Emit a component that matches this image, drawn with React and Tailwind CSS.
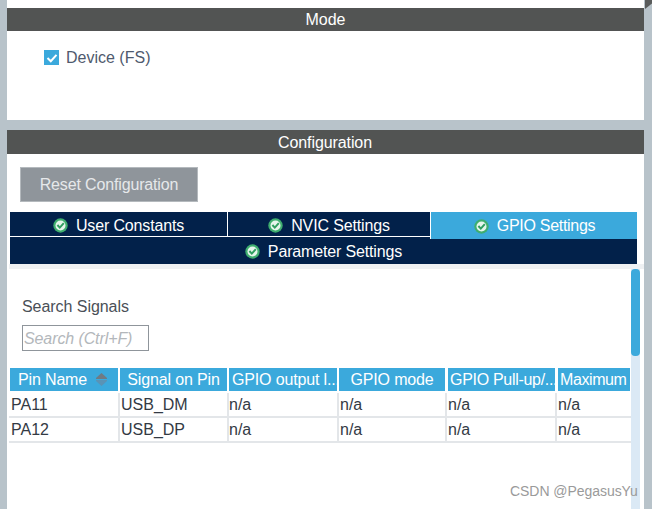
const font = { fontFamily: '"Liberation Sans", Arial, sans-serif' }

function OkIcon() {
  return (
    <svg width="15" height="15" viewBox="0 0 15 15" className="shrink-0">
      <circle cx="7.5" cy="7.5" r="7.2" fill="#3fae6f" />
      <circle cx="7.5" cy="7.5" r="5" fill="#e6f5ec" />
      <path d="M4.4 7 L6.8 9.6 L10.8 5.2" fill="none" stroke="#2f9e5f" strokeWidth="2" />
    </svg>
  )
}

function Tab({ label, className }) {
  return (
    <div className={`flex items-center justify-center gap-2 text-white ${className}`}>
      <OkIcon />
      <span>{label}</span>
    </div>
  )
}

const columns = [
  { label: 'Signal on Pin', className: 'w-[107px] ml-[2px] justify-center' },
  { label: 'GPIO output l...', className: 'w-[108px] ml-[2px] pl-[3px]' },
  { label: 'GPIO mode', className: 'w-[106px] ml-[2px] justify-center' },
  { label: 'GPIO Pull-up/...', className: 'w-[107px] ml-[3px] pl-[2px] tracking-[-0.3px]' },
  { label: 'Maximum', className: 'w-[72px] ml-[3px] pl-[2px] tracking-[-0.4px]' },
]

const rows = [
  ['PA11', 'USB_DM', 'n/a', 'n/a', 'n/a', 'n/a'],
  ['PA12', 'USB_DP', 'n/a', 'n/a', 'n/a', 'n/a'],
]
const cells = [
  'w-[111px] pl-[2px] border-r-2',
  'w-[109px] pl-[1px] border-r-2',
  'w-[110px] border-r-2',
  'w-[108px] pl-[1px] border-r-2',
  'w-[110px] pl-[1px] border-r-2',
  'w-[73px] pl-[1px]',
]

export default function App() {
  return (
    <div className="relative w-[652px] h-[509px] overflow-hidden bg-[#b8c3ca] pl-[7px] text-[16px]" style={font}>
      <div className="absolute right-0 top-0 w-[7px] h-[9px] bg-[#5a5c5c] [clip-path:polygon(0_0,100%_0,100%_40%,0_100%)]" />

      <div className="w-[637px] h-[120px] bg-white pt-2">
        <div className="h-[23px] bg-[#525453] text-white flex items-center justify-center">Mode</div>
        <div className="flex items-center gap-[7px] pl-[37px] pt-[19px] text-[#4f5a6e] leading-[15px]">
          <span className="w-[15px] h-[15px] bg-[#3ba9dc] flex items-center justify-center">
            <svg width="12" height="12" viewBox="0 0 12 12">
              <path d="M1.5 6 L4.8 9.2 L10.5 2.8" fill="none" stroke="white" strokeWidth="2" />
            </svg>
          </span>
          <span>Device (FS)</span>
        </div>
      </div>

      <div className="mt-[10px] w-[637px] h-[379px] bg-white">
        <div className="h-[24px] pt-[1px] pr-[1px] bg-[#525453] text-white flex items-center justify-center tracking-[-0.1px]">Configuration</div>
        <div className="ml-[13px] mt-[13px] w-[178px] h-[35px] bg-[#8f959b] border border-[#b4b9bd] text-[#e6e8ea] flex items-center justify-center tracking-[-0.15px]">
          Reset Configuration
        </div>

        <div className="ml-[3px] mt-[10px] w-[627px] bg-[#02214a]">
          <div className="flex h-[27px]">
            <Tab label="User Constants" className="w-[218px] h-[25px] pt-[3px] border-r border-b border-white tracking-[-0.15px]" />
            <Tab label="NVIC Settings" className="w-[202px] h-[25px] pt-[3px] border-b border-white tracking-[-0.15px]" />
            <div className="w-[1px] bg-white" />
            <Tab label="GPIO Settings" className="w-[206px] pt-[1px] pl-[1px] bg-[#3ba9dc] tracking-[-0.3px]" />
          </div>
          <Tab label="Parameter Settings" className="h-[25px] tracking-[-0.15px]" />
        </div>

        <div className="h-[5px] ml-[2px] bg-[#eff1f3]" />

        <div className="flex ml-[2px] h-[240px]">
          <div className="w-[622px]">
            <div className="pl-[13px] pt-[29px] text-[#4a4f57] leading-[18px] tracking-[-0.05px]">Search Signals</div>
            <div className="ml-[13px] mt-[9px] w-[127px] h-[26px] pt-[1px] border border-[#8f959b] pl-[1px] italic text-[#b3b7bb] flex items-center tracking-[-0.1px]">
              Search (Ctrl+F)
            </div>

            <div className="flex mt-[17px] ml-[1px] h-[23px] text-white tracking-[-0.15px]">
              <div className="w-[108px] bg-[#3ba9dc] flex items-center pl-[8px] gap-[9px]">
                <span>Pin Name</span>
                <svg width="11" height="13" viewBox="0 0 11 13">
                  <path d="M5.5 0 L11 5 V6 H0 V5 Z" fill="#6f7b84" />
                  <path d="M0 7 H11 V8 L5.5 13 L0 8 Z" fill="#5a93b5" />
                </svg>
              </div>
              {columns.map((c) => (
                <div key={c.label} className={`bg-[#3ba9dc] flex items-center whitespace-nowrap ${c.className}`}>
                  {c.label}
                </div>
              ))}
            </div>

            <div className="mt-[2px] text-[#333a44]">
              {rows.map((row) => (
                <div key={row[0]} className="flex h-[25px] border-b-2 border-[#e3e6e9]">
                  {row.map((cell, i) => (
                    <div key={i} className={`${cells[i]} h-[23px] flex items-center border-[#e3e6e9]`}>
                      {cell}
                    </div>
                  ))}
                </div>
              ))}
            </div>
          </div>

          <div className="w-[9px] bg-[#dbe9f5]">
            <div className="w-[9px] h-[87px] bg-[#3ba9dc] rounded-[4px]" />
          </div>
        </div>
      </div>

      <div className="absolute left-[510px] top-[483px] text-[14px] leading-[16px] text-[#9a9a9a] tracking-[-0.05px]">CSDN @PegasusYu</div>
    </div>
  )
}
